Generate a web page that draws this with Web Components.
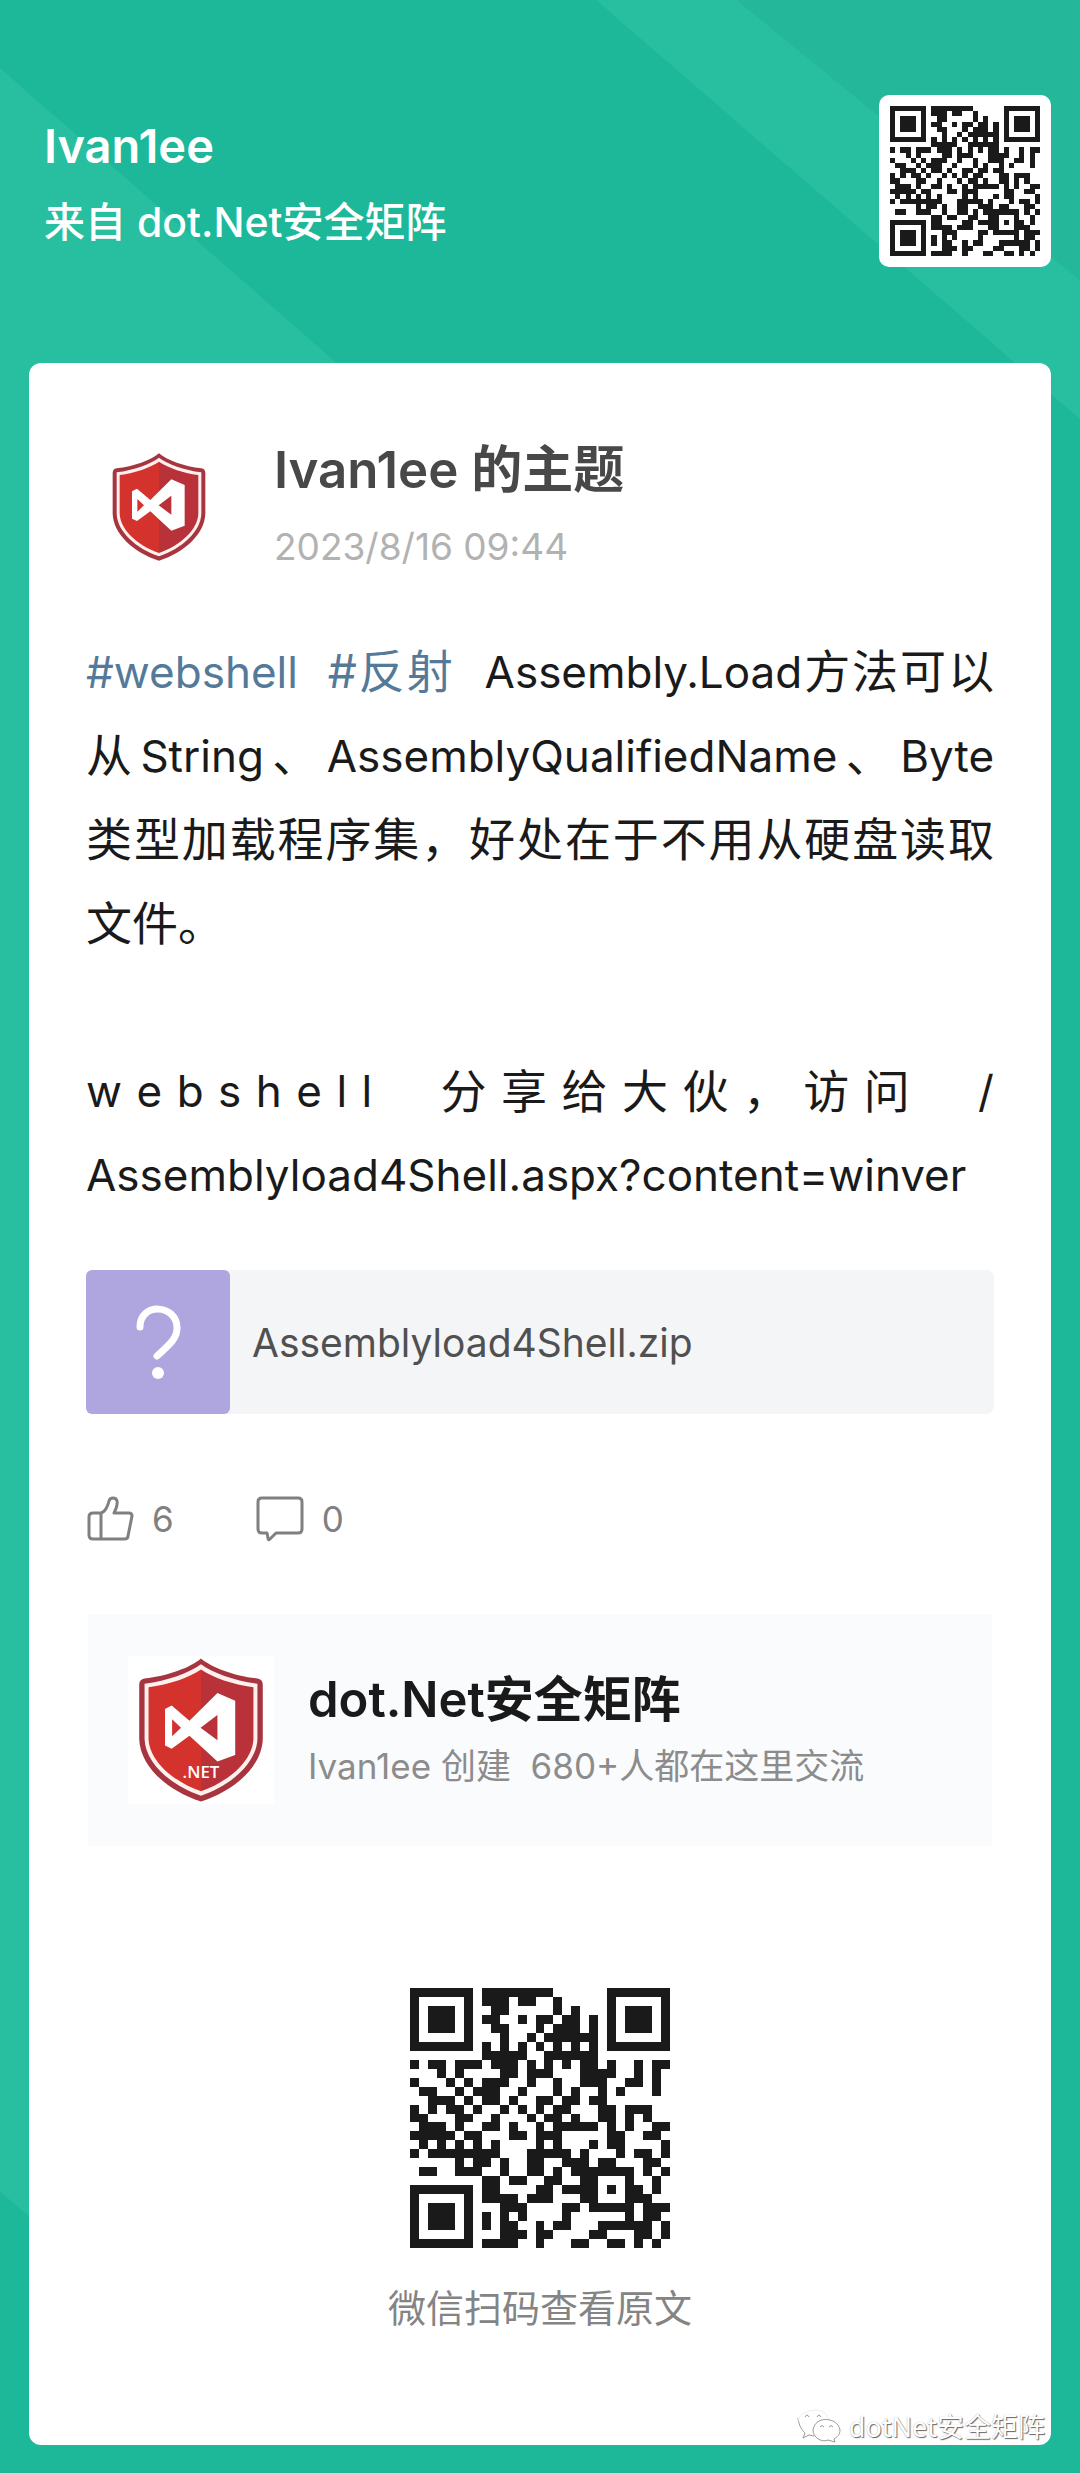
<!DOCTYPE html>
<html lang="zh-CN">
<head>
<meta charset="utf-8">
<meta name="viewport" content="width=device-width, initial-scale=1">
<title>dot.Net安全矩阵</title>
<style>
    body {
        margin: 0;
        font-family: Inter, "Noto Sans CJK SC", sans-serif;
        color: #1a1a1a;
    }
    /* latin runs sit a step smaller than the hanzi around them */
    topic-text .en { font-size: 44px; }
    topic-text p .en { line-height: 1; }
    topic-text a { color: #557a99; text-decoration: none; }
</style>
</head>
<body>
<share-poster>
    <user-header slot="header" name="Ivan1ee" from="来自 dot.Net安全矩阵"></user-header>
    <topic-card>
        <topic-author title="Ivan1ee 的主题" time="2023/8/16 09:44"></topic-author>
        <topic-text>
            <p><a class="en" href="#webshell">#webshell</a>&nbsp; <a href="#reflection">#反射</a>&nbsp; <span class="en">Assembly.Load</span>方法可以从<span class="en">String</span>、<span class="en">AssemblyQualifiedName</span>、<span class="en">Byte</span>类型加载程序集，好处在于不用从硬盘读取文件。</p>
            <spread-line>webshell&nbsp; 分享给大伙，访问&nbsp; /</spread-line>
            <p class="en">Assemblyload4Shell.aspx?content=winver</p>
        </topic-text>
        <file-item name="Assemblyload4Shell.zip"></file-item>
        <topic-actions likes="6" comments="0"></topic-actions>
        <group-card name="dot.Net安全矩阵" info="Ivan1ee 创建&nbsp; 680+人都在这里交流"></group-card>
        <scan-code>微信扫码查看原文</scan-code>
        <account-mark slot="mark">dotNet安全矩阵</account-mark>
    </topic-card>
</share-poster>

<script>
// one string per row, # is a dark module
const QR_ROWS = [
    '#######.########......#######',
    '#.....#.###.##..#.....#.....#',
    '#.###.#..##.....#.#...#.###.#',
    '#.###.#.##..#.##.##.#.#.###.#',
    '#.###.#..##...#.###.#.#.###.#',
    '#.....#...#..#.######.#.....#',
    '#######.#.#.#.#.#.#.#.#######',
    '........#####..######........',
    '#.##.###.###.#.#.#.##.#..#.##',
    '...#.#....##.###...####..#.#.',
    '#...#.#.###..#..#..###..##.#.',
    '.##..#.###..#...#.#..#.#...#.',
    '..###.#.##.#..##.##.##.......',
    '#.#.##.#..#.#.#.##...##.###..',
    '##...##..#...#.##.#..##.#.#..',
    '.###.#..##.#..#.#####.#.#..##',
    '#####.##...##.###.....##..##.',
    '.#.#.#.#.#....#.#...#.##....#',
    '#.########...#####.#...#.##.#',
    '.....#.##.#..##..###.##...##.',
    '.##..###..#..##.#.#######.#.#',
    '........##.##..##..##...#..#.',
    '#######.##....##.####.#.##.#.',
    '#.....#.####.###...##...###..',
    '#.###.#...###....##.#####.###',
    '#.###.#.#.#.#....#......#.##.',
    '#.###.#.#.##..#.##...######.#',
    '#.....#...###.##....##...##.#',
    '#######.####..#...##..##.#.#.'
];

class QrCode extends HTMLElement {
    constructor() {
        super();
        this.root = this.attachShadow({mode: 'open'});
        let d = '';
        QR_ROWS.forEach((row, y) => {
            for (const run of row.matchAll(/#+/g)) {
                d += `M${run.index} ${y}h${run[0].length}v1h-${run[0].length}z`;
            }
        });
        this.root.innerHTML = `
        <style>
            :host { display: block; }
            svg { display: block; width: 100%; height: 100%; }
        </style>
        <svg viewBox="0 0 29 29" role="img" aria-label="QR" shape-rendering="crispEdges">
            <path d="${d}" fill="#1a1a1a"/>
        </svg>`;
    }
}
customElements.define('qr-code', QrCode);

class ShieldLogo extends HTMLElement {
    constructor() {
        super();
        this.root = this.attachShadow({mode: 'open'});
    }
    connectedCallback() {
        const label = this.getAttribute('label') || '';
        this.root.innerHTML = `
        <style>
            :host { display: block; }
            svg { display: block; width: 100%; height: 100%; }
            text { font: 600 38px "Open Sans", sans-serif; }
        </style>
        <svg viewBox="338 308 282 324" aria-hidden="true">
            <path fill="#a63540" d="M479 309C456 329 402 349 352 354Q340 356 340 368V490C342 551 402 606 479 631C556 606 616 551 618 490V368Q618 356 606 354C556 349 502 329 479 309Z"/>
            <path fill="#fff0ee" d="M479 322C452 342 404 359 352 366V490C354 544 410 594 479 618C548 594 604 544 606 490V366C554 359 506 342 479 322Z"/>
            <path fill="#d3322d" d="M479 334C452 352 408 368 361 374V490C363 538 414 585 479 608Z"/>
            <path fill="#b93139" d="M479 334C506 352 550 368 597 374V490C595 538 544 585 479 608Z"/>
            <path fill="#fff" fill-rule="evenodd" d="M398 423L413 415L453 449L516 387L556 404V526L516 541L453 483L413 512L398 505ZM414 446V484L434 465ZM516 436L478 465L516 493Z"/>
            ${label && `<text x="479" y="577" text-anchor="middle" fill="#fff">${label}</text>`}
        </svg>`;
    }
}
customElements.define('shield-logo', ShieldLogo);

class SharePoster extends HTMLElement {
    constructor() {
        super();
        this.root = this.attachShadow({mode: 'open'});
        this.root.innerHTML = `
        <style>
            :host {
                display: block;
                position: relative;
                box-sizing: border-box;
                min-height: 100vh;
                padding: 95px 29px 30px;
                background: #1cb899;
                overflow: hidden;
            }
            .stripes {
                position: absolute;
                top: 0;
                left: 0;
                width: 100%;
                height: 100%;
            }
            main { position: relative; }
        </style>
        <svg class="stripes" viewBox="0 0 1080 2473" preserveAspectRatio="none" aria-hidden="true">
            <path d="M0 68L345 370H60V2240L0 2190Z" fill="#28bea0"/>
            <path d="M596 0H737L1080 280V419Z" fill="#28bea0"/>
            <path d="M737 0H1080V280Z" fill="#25b799"/>
        </svg>
        <main>
            <slot name="header"></slot>
            <slot></slot>
        </main>`;
    }
}
customElements.define('share-poster', SharePoster);

class UserHeader extends HTMLElement {
    constructor() {
        super();
        this.root = this.attachShadow({mode: 'open'});
    }
    connectedCallback() {
        this.root.innerHTML = `
        <style>
            :host {
                display: flex;
                justify-content: space-between;
                align-items: flex-start;
                padding: 0 0 96px 15px;
                color: #fff;
            }
            h1, p { margin: 0; line-height: 60px; }
            h1 { padding-top: 21px; font-size: 47px; font-weight: 600; }
            p { padding-top: 16px; font-size: 41px; font-weight: 500; }
            qr-code {
                width: 150px;
                height: 150px;
                padding: 11px;
                background: #fff;
                border-radius: 10px;
            }
        </style>
        <div>
            <h1>${this.getAttribute('name')}</h1>
            <p>${this.getAttribute('from')}</p>
        </div>
        <qr-code></qr-code>`;
    }
}
customElements.define('user-header', UserHeader);

class TopicCard extends HTMLElement {
    constructor() {
        super();
        this.root = this.attachShadow({mode: 'open'});
        this.root.innerHTML = `
        <style>
            :host {
                display: block;
                position: relative;
                padding: 72px 57px 113px;
                background: #fff;
                border-radius: 12px;
            }
            .mark { position: absolute; right: 6px; bottom: 0; }
        </style>
        <slot></slot>
        <div class="mark"><slot name="mark"></slot></div>`;
    }
}
customElements.define('topic-card', TopicCard);

class TopicAuthor extends HTMLElement {
    constructor() {
        super();
        this.root = this.attachShadow({mode: 'open'});
    }
    connectedCallback() {
        this.root.innerHTML = `
        <style>
            :host { display: flex; gap: 68px; padding-left: 26px; }
            shield-logo { width: 94px; height: 108px; margin-top: 18px; }
            h2, time { display: block; margin: 0; }
            h2 { font-size: 51px; line-height: 70px; font-weight: 600; color: #484848; }
            time { margin-top: 16px; font-size: 37px; line-height: 52px; color: #b2b2b2; }
        </style>
        <shield-logo></shield-logo>
        <div>
            <h2>${this.getAttribute('title')}</h2>
            <time>${this.getAttribute('time')}</time>
        </div>`;
    }
}
customElements.define('topic-author', TopicAuthor);

class TopicText extends HTMLElement {
    constructor() {
        super();
        this.root = this.attachShadow({mode: 'open'});
        this.root.innerHTML = `
        <style>
            :host { display: block; margin-top: 56px; font-size: 46px; line-height: 84px; }
            ::slotted(p) { margin: 0; text-align: justify; }
            ::slotted(spread-line) { margin-top: 84px; }
        </style>
        <slot></slot>`;
    }
}
customElements.define('topic-text', TopicText);

// a line justified between every character, latin letters too
class SpreadLine extends HTMLElement {
    constructor() {
        super();
        this.root = this.attachShadow({mode: 'open'});
    }
    connectedCallback() {
        this.root.innerHTML = `
        <style>
            :host { display: block; }
            div { display: flex; justify-content: space-between; height: 84px; white-space: pre; }
            .en { font-size: 44px; }
        </style>
        <div></div>`;
        const line = this.root.querySelector('div');
        for (const char of this.textContent) {
            const span = document.createElement('span');
            span.textContent = char;
            if (char < '\u0100') span.className = 'en';
            line.appendChild(span);
        }
    }
}
customElements.define('spread-line', SpreadLine);

class FileItem extends HTMLElement {
    constructor() {
        super();
        this.root = this.attachShadow({mode: 'open'});
    }
    connectedCallback() {
        this.root.innerHTML = `
        <style>
            :host { display: block; margin-top: 53px; }
            a {
                display: flex;
                align-items: center;
                gap: 22px;
                background: #f3f5f7;
                border-radius: 8px;
                color: #505050;
                font-size: 39px;
                text-decoration: none;
            }
            svg { display: block; width: 144px; height: 144px; background: #b0a6df; border-radius: 6px; }
        </style>
        <a href="#file">
            <svg viewBox="0 0 144 144" fill="none" stroke="#fff" stroke-width="7" stroke-linecap="round" aria-hidden="true">
                <path d="M54 57C54 32 91 34 91 58C91 69 83 75 71 86"/>
                <circle cx="72" cy="103" r="6" fill="#fff" stroke="none"/>
            </svg>
            <span>${this.getAttribute('name')}</span>
        </a>`;
    }
}
customElements.define('file-item', FileItem);

class TopicActions extends HTMLElement {
    constructor() {
        super();
        this.root = this.attachShadow({mode: 'open'});
    }
    connectedCallback() {
        this.root.innerHTML = `
        <style>
            :host { display: flex; gap: 82px; margin-top: 80px; }
            button {
                display: flex;
                align-items: center;
                gap: 18px;
                padding: 0;
                border: 0;
                background: none;
                color: #808080;
                font: inherit;
                font-size: 35px;
                line-height: 50px;
            }
            svg { display: block; width: 48px; height: 48px; }
        </style>
        <button aria-label="${this.getAttribute('likes')}">
            <svg viewBox="0 0 48 48" fill="none" stroke="#808080" stroke-width="3" stroke-linejoin="round" aria-hidden="true">
                <path d="M15 18H7Q3 18 3 22V40Q3 44 7 44H38Q42 44 42 41L46 21Q46 18 43 18H28C30 14 32 10 31 6C30 2 24 2 23 6C22 11 19 17 15 18V44"/>
            </svg>
            <span>${this.getAttribute('likes')}</span>
        </button>
        <button aria-label="${this.getAttribute('comments')}">
            <svg viewBox="0 0 48 48" fill="none" stroke="#808080" stroke-width="3" stroke-linejoin="round" aria-hidden="true">
                <path d="M6 3H42Q46 3 46 7V34Q46 38 42 38H20L14 44Q12 46 12 43L11 38H6Q2 38 2 34V7Q2 3 6 3Z"/>
            </svg>
            <span>${this.getAttribute('comments')}</span>
        </button>`;
    }
}
customElements.define('topic-actions', TopicActions);

class GroupCard extends HTMLElement {
    constructor() {
        super();
        this.root = this.attachShadow({mode: 'open'});
    }
    connectedCallback() {
        this.root.innerHTML = `
        <style>
            :host {
                display: flex;
                align-items: center;
                gap: 34px;
                margin: 70px 2px 0;
                padding: 42px 40px;
                background: #fafbfd;
            }
            shield-logo { flex: none; width: 126px; height: 144px; padding: 2px 10px; background: #fff; }
            h3, p { margin: 0; }
            h3 { font-size: 49px; line-height: 72px; font-weight: 600; }
            p { font-size: 35px; line-height: 60px; color: #8c8c8c; }
        </style>
        <shield-logo label=".NET"></shield-logo>
        <div>
            <h3>${this.getAttribute('name')}</h3>
            <p>${this.getAttribute('info')}</p>
        </div>`;
    }
}
customElements.define('group-card', GroupCard);

class ScanCode extends HTMLElement {
    constructor() {
        super();
        this.root = this.attachShadow({mode: 'open'});
        this.root.innerHTML = `
        <style>
            :host {
                display: flex;
                flex-direction: column;
                align-items: center;
                gap: 36px;
                margin-top: 142px;
                color: #848484;
                font-size: 38px;
                line-height: 48px;
            }
            qr-code { width: 260px; height: 260px; }
        </style>
        <qr-code></qr-code>
        <div><slot></slot></div>`;
    }
}
customElements.define('scan-code', ScanCode);

class AccountMark extends HTMLElement {
    constructor() {
        super();
        this.root = this.attachShadow({mode: 'open'});
        this.root.innerHTML = `
        <style>
            :host {
                display: flex;
                align-items: center;
                gap: 8px;
                color: #fff;
                font: 27px "Noto Sans", "Noto Sans CJK SC", sans-serif;
                line-height: 36px;
                text-shadow: 1px 1px 1px #666, 0 0 1px #aaa;
            }
            svg { display: block; width: 44px; height: 36px; }
        </style>
        <svg viewBox="0 0 44 36" fill="none" stroke="#999" stroke-width="1" aria-hidden="true">
            <path d="M1 9C2 18 6 22 8 24L6 29L12 26L17 27"/>
            <path d="M1 12C2 0 30 -4 31 10" stroke="#eee"/>
            <path d="M8 8Q10 4 12 8M20 8Q22 4 24 8M23 18Q25 15 27 18M32 18Q34 15 36 18"/>
            <path d="M38 33L31 31C24 34 16 28 16 21C18 6 41 8 43 21C43 26 40 28 37 30Z"/>
        </svg>
        <slot></slot>`;
    }
}
customElements.define('account-mark', AccountMark);
</script>
</body>
</html>
